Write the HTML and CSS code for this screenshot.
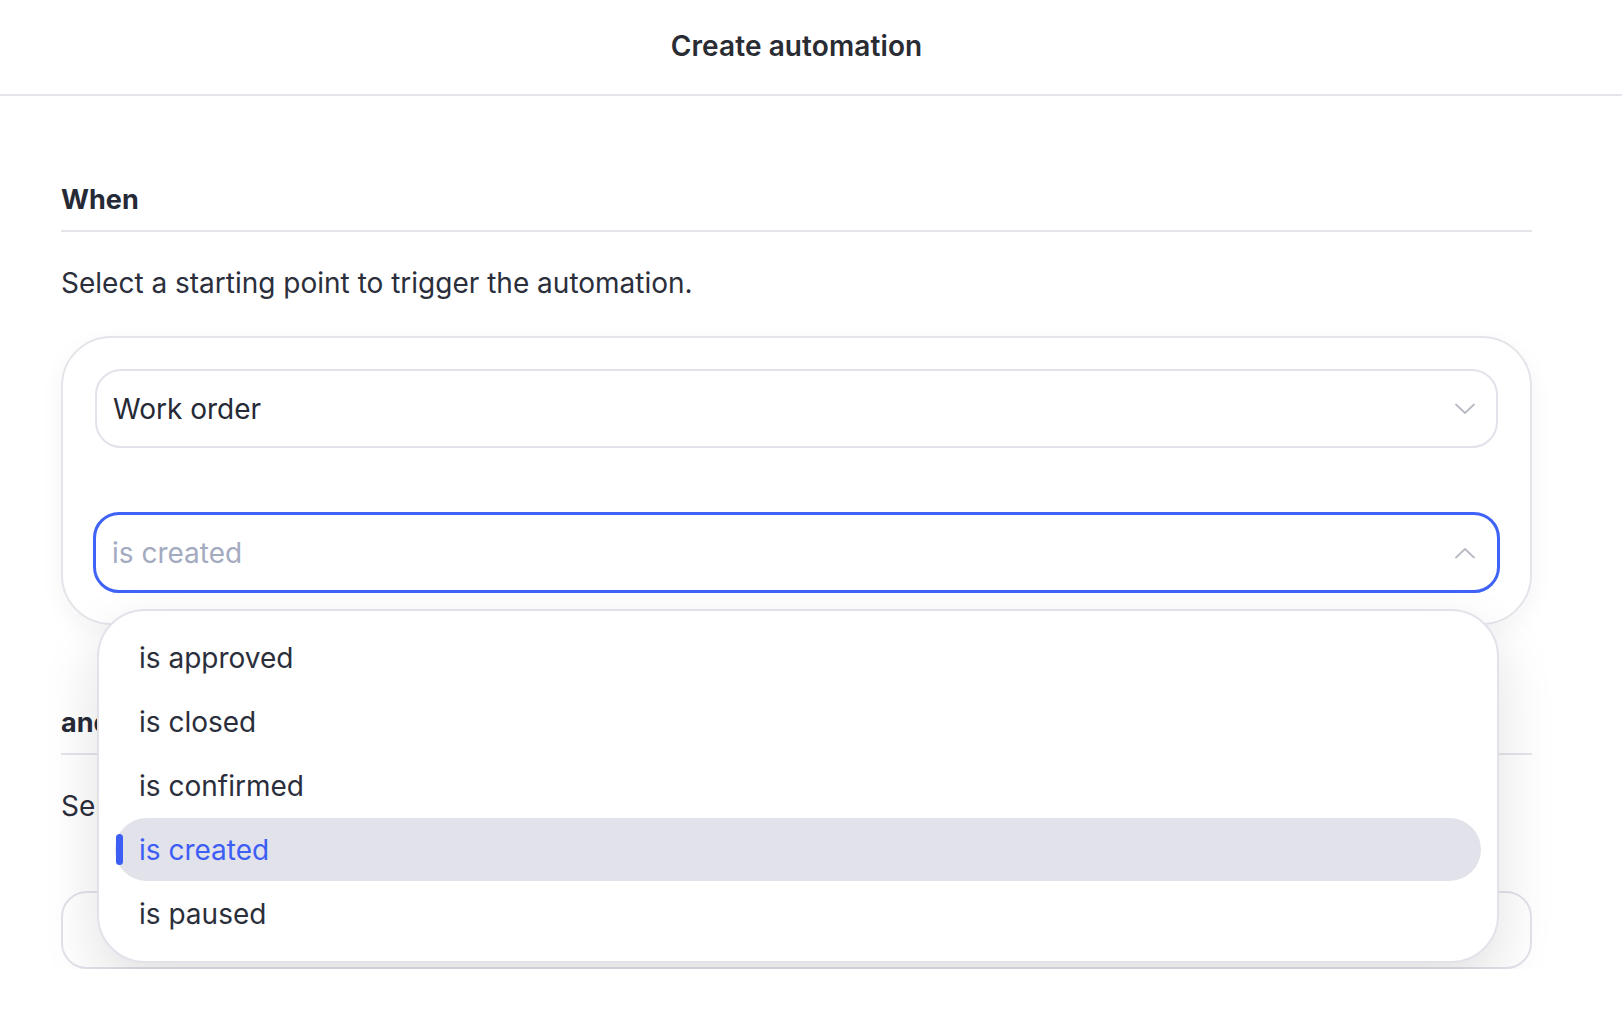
FILE: index.html
```html
<!DOCTYPE html>
<html lang="en">
<head>
    <meta charset="UTF-8">
    <meta name="viewport" content="width=device-width, initial-scale=1.0">
    <title>Create automation</title>
    <link rel="stylesheet" href="styles.css">
</head>
<body>
    <div class="topbar">
        <h1>Create automation</h1>
    </div>

    <div class="page">
        <div class="section">
            <h2 class="section-title">When</h2>
            <p class="section-desc">Select a starting point to trigger the automation.</p>

            <div class="card">
                <div class="select">
                    <span class="select-value">Work order</span>
                    <svg class="chevron" viewBox="0 0 20 12" width="20" height="12">
                        <path d="M1 1.5 L10 10 L19 1.5" fill="none" stroke="currentColor" stroke-width="1.8" stroke-linecap="round" stroke-linejoin="round"/>
                    </svg>
                </div>

                <div class="select-wrap">
                    <div class="select select-open">
                        <span class="select-value placeholder">is created</span>
                        <svg class="chevron" viewBox="0 0 20 12" width="20" height="12">
                            <path d="M1 10.5 L10 2 L19 10.5" fill="none" stroke="currentColor" stroke-width="1.8" stroke-linecap="round" stroke-linejoin="round"/>
                        </svg>
                    </div>

                    <ul class="dropdown">
                        <li class="option">is approved</li>
                        <li class="option">is closed</li>
                        <li class="option">is confirmed</li>
                        <li class="option selected">is created</li>
                        <li class="option">is paused</li>
                    </ul>
                </div>
            </div>
        </div>

        <div class="section section-next">
            <h2 class="section-title">and</h2>
            <p class="section-desc">Select an action.</p>

            <div class="select select-plain"></div>
        </div>
    </div>
</body>
</html>
```

FILE: styles.css
```css
* {
    box-sizing: border-box;
}

body {
    margin: 0;
    background: #fff;
    font-family: 'Inter', 'Noto Sans', sans-serif;
    color: #2b2e3b;
    overflow: hidden;
}

.topbar {
    height: 96px;
    padding: 0 90px 0 61px;
    border-bottom: 2px solid #e4e4ea;
    display: flex;
    justify-content: center;
    align-items: center;
}

.topbar h1 {
    margin: 0 0 2px;
    font-size: 28px;
    font-weight: 600;
    color: #2a2c33;
    letter-spacing: 0.1px;
}

.page {
    padding: 0 90px 0 61px;
}

.section {
    padding-top: 87px;
}

.section-next {
    padding-top: 81px;
}

.section-title {
    margin: 0;
    font-size: 27px;
    line-height: 34px;
    font-weight: 700;
    color: #262936;
    padding-bottom: 13px;
    border-bottom: 2px solid #e4e4ea;
}

.section-desc {
    margin: 34px 0 36px;
    font-size: 28px;
    line-height: 34px;
    color: #2b2e3b;
}

.section-next .section-desc {
    margin-bottom: 68px;
}

.card {
    border: 2px solid #e4e4ea;
    border-radius: 50px;
    padding: 31px 32px 30px 32px;
    box-shadow: 0 8px 24px rgba(30, 30, 60, 0.05);
}

.select {
    height: 79px;
    border: 2px solid #e2e2ea;
    border-radius: 26px;
    padding: 0 21px 0 16px;
    display: flex;
    align-items: center;
    justify-content: space-between;
    background: #fff;
}

.select-value {
    font-size: 28px;
    color: #262936;
}

.select-value.placeholder {
    color: #a4aac0;
}

.chevron {
    color: #b7bbc3;
}

.select-wrap {
    position: relative;
    margin-top: 64px;
}

.select-open {
    height: 81px;
    margin: 0 -2px;
    border: 3px solid #3f63f6;
    padding-left: 16px;
    padding-right: 22px;
}

.select-plain {
    height: 78px;
    border-radius: 26px;
}

.dropdown {
    position: absolute;
    top: 97px;
    left: 2px;
    right: -1px;
    margin: 0;
    padding: 15px 16px;
    list-style: none;
    background: #fff;
    border: 2px solid #e2e2ea;
    border-radius: 48px;
    box-shadow: 0 24px 56px rgba(20, 20, 40, 0.13);
    z-index: 10;
}

.option {
    position: relative;
    height: 64px;
    padding-left: 24px;
    display: flex;
    align-items: center;
    font-size: 28px;
    color: #2b2e3b;
}

.option.selected {
    height: 63px;
    margin-bottom: 1px;
    background: #e2e2ea;
    border-radius: 32px;
    color: #3d5ef5;
}

.option.selected:before {
    content: '';
    position: absolute;
    left: 1px;
    top: 16px;
    width: 7px;
    height: 31px;
    border-radius: 4px;
    background: #3d5ef5;
}
```
